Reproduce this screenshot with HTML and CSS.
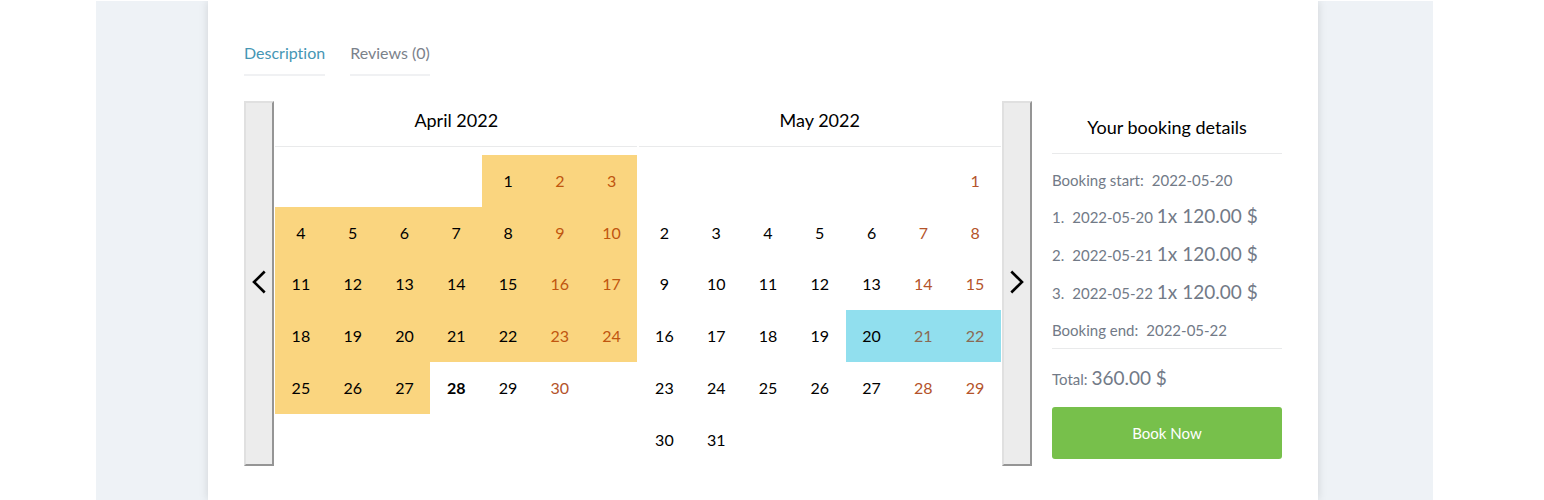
FILE: index.html
```html
<!DOCTYPE html>
<html lang="en">
<head>
<meta charset="utf-8">
<meta name="viewport" content="width=device-width, initial-scale=1">
<title>Booking</title>
<link rel="stylesheet" href="styles.css">
</head>
<body>
<div class="site">
<main class="card">
  <nav class="tabs" aria-label="Product information">
    <a class="tab tab-active" href="#description">Description</a>
    <a class="tab" href="#reviews">Reviews (0)</a>
  </nav>
  <div class="booking" id="description">
    <section class="calendar" aria-label="Calendar">
      <button class="arrow" type="button" aria-label="Previous month">
        <svg class="arrow-icon" viewBox="0 0 16 26"><path d="M13.700 1.500 3 12 13.700 22.500"/></svg>
      </button>
      <div class="months">
        <table class="month">
          <caption class="month-title">April 2022</caption>
          <tbody>
            <tr><td></td><td></td><td></td><td></td><td class="booked">1</td><td class="booked weekend">2</td><td class="booked weekend">3</td></tr>
            <tr><td class="booked">4</td><td class="booked">5</td><td class="booked">6</td><td class="booked">7</td><td class="booked">8</td><td class="booked weekend">9</td><td class="booked weekend">10</td></tr>
            <tr><td class="booked">11</td><td class="booked">12</td><td class="booked">13</td><td class="booked">14</td><td class="booked">15</td><td class="booked weekend">16</td><td class="booked weekend">17</td></tr>
            <tr><td class="booked">18</td><td class="booked">19</td><td class="booked">20</td><td class="booked">21</td><td class="booked">22</td><td class="booked weekend">23</td><td class="booked weekend">24</td></tr>
            <tr><td class="booked">25</td><td class="booked">26</td><td class="booked">27</td><td class="today">28</td><td>29</td><td class="weekend">30</td><td></td></tr>
          </tbody>
        </table>
        <table class="month">
          <caption class="month-title">May 2022</caption>
          <tbody>
            <tr><td></td><td></td><td></td><td></td><td></td><td></td><td class="weekend">1</td></tr>
            <tr><td>2</td><td>3</td><td>4</td><td>5</td><td>6</td><td class="weekend">7</td><td class="weekend">8</td></tr>
            <tr><td>9</td><td>10</td><td>11</td><td>12</td><td>13</td><td class="weekend">14</td><td class="weekend">15</td></tr>
            <tr><td>16</td><td>17</td><td>18</td><td>19</td><td class="selected">20</td><td class="selected weekend">21</td><td class="selected weekend">22</td></tr>
            <tr><td>23</td><td>24</td><td>25</td><td>26</td><td>27</td><td class="weekend">28</td><td class="weekend">29</td></tr>
            <tr><td>30</td><td>31</td><td></td><td></td><td></td><td></td><td></td></tr>
          </tbody>
        </table>
      </div>
      <button class="arrow" type="button" aria-label="Next month">
        <svg class="arrow-icon" viewBox="0 0 16 26"><path d="M2.300 1.500 13 12 2.300 22.500"/></svg>
      </button>
    </section>
    <aside class="details">
      <h2 class="details-title">Your booking details</h2>
      <div class="details-list">
        <p class="line"><span class="label">Booking start:</span><span>2022-05-20</span></p>
        <p class="line line-day"><span class="label">1.</span><span>2022-05-20</span> <span class="price">1x 120.00 $</span></p>
        <p class="line line-day"><span class="label">2.</span><span>2022-05-21</span> <span class="price">1x 120.00 $</span></p>
        <p class="line line-day"><span class="label">3.</span><span>2022-05-22</span> <span class="price">1x 120.00 $</span></p>
        <p class="line"><span class="label">Booking end:</span><span>2022-05-22</span></p>
      </div>
      <p class="total">Total: <span class="price">360.00 $</span></p>
      <button class="book" type="button">Book Now</button>
    </aside>
  </div>
</main>
</div>
</body>
</html>
```
FILE: styles.css
```css
* {
  box-sizing: border-box;
}

body {
  margin: 0;
  padding: 1px 111px 0 96px;
  background: #fff;
  color: #727a87;
  font-family: Lato, "Liberation Sans", sans-serif;
  font-size: 16px;
  line-height: 24px;
  font-variant-ligatures: none;
}

.site {
  min-height: calc(100vh - 1px);
  display: flex;
  padding: 0 115px 0 112px;
  background: #eef2f6;
  overflow: hidden;
}

.card {
  flex: 1;
  min-width: 0;
  padding: 40px 36px 34px;
  background: #fff;
  box-shadow: 0 0 9px rgba(0, 0, 0, 0.13);
}

.tabs {
  display: flex;
  gap: 25px;
  margin-bottom: 25px;
}

.tab {
  padding-bottom: 9px;
  border-bottom: 2px solid #f0f1f3;
  color: #7b828b;
  text-decoration: none;
}

.tab-active {
  color: #4596b4;
}

.booking {
  display: flex;
  align-items: flex-start;
  gap: 20px;
}

.calendar {
  flex: 1;
  min-width: 0;
  display: flex;
}

.arrow {
  flex: none;
  width: 30px;
  display: flex;
  align-items: center;
  justify-content: center;
  padding: 0;
  background: #ececec;
  border: 2px solid;
  border-color: #e0e0e0 #959595 #959595 #e0e0e0;
  cursor: pointer;
}

.arrow-icon {
  width: 16px;
  height: 26px;
  fill: none;
  stroke: #000;
  stroke-width: 2.6;
}

.months {
  flex: 1;
  display: grid;
  grid-template-columns: 1fr 1fr;
  column-gap: 1px;
  align-items: start;
  padding: 0 1px;
}

.month {
  display: grid;
  grid-template-columns: repeat(7, 1fr);
  color: #000;
}

.month-title {
  grid-column: 1 / -1;
  height: 46px;
  margin-bottom: 8px;
  padding-top: 7px;
  border-bottom: 1px solid #e9eaeb;
  font-size: 18px;
}

.month tbody,
.month tr {
  display: contents;
}

.month td {
  display: flex;
  align-items: center;
  justify-content: center;
  aspect-ratio: 1;
  min-width: 0;
  padding: 0;
}

.month .booked {
  background: #fad57f;
}

.month .selected {
  background: #91dfee;
}

.month .weekend {
  color: #b4532a;
}

.month .booked.weekend {
  color: #c0560f;
}

.month .selected.weekend {
  color: #8a6a55;
}

.month .today {
  font-weight: 700;
}

.details {
  flex: 0 0 230px;
  font-size: 15px;
}

.details-title {
  margin: 0;
  padding: 14px 0;
  border-bottom: 1px solid #e9eaeb;
  color: #000;
  font-size: 18px;
  font-weight: 400;
  text-align: center;
}

.details-list {
  padding-top: 8px;
  border-bottom: 1px solid #e9eaeb;
}

.line {
  margin: 0;
  line-height: 36px;
}

.line-day {
  line-height: 38px;
}

.label {
  margin-right: 8px;
}

.price {
  font-size: 19px;
  line-height: 1;
}

.total {
  margin: 0;
  padding: 11px 0 9px;
  line-height: 38px;
}

.book {
  display: block;
  width: 100%;
  height: 52px;
  border: 0;
  border-radius: 3px;
  background: #77c04b;
  color: #fff;
  font: inherit;
  cursor: pointer;
}
```
